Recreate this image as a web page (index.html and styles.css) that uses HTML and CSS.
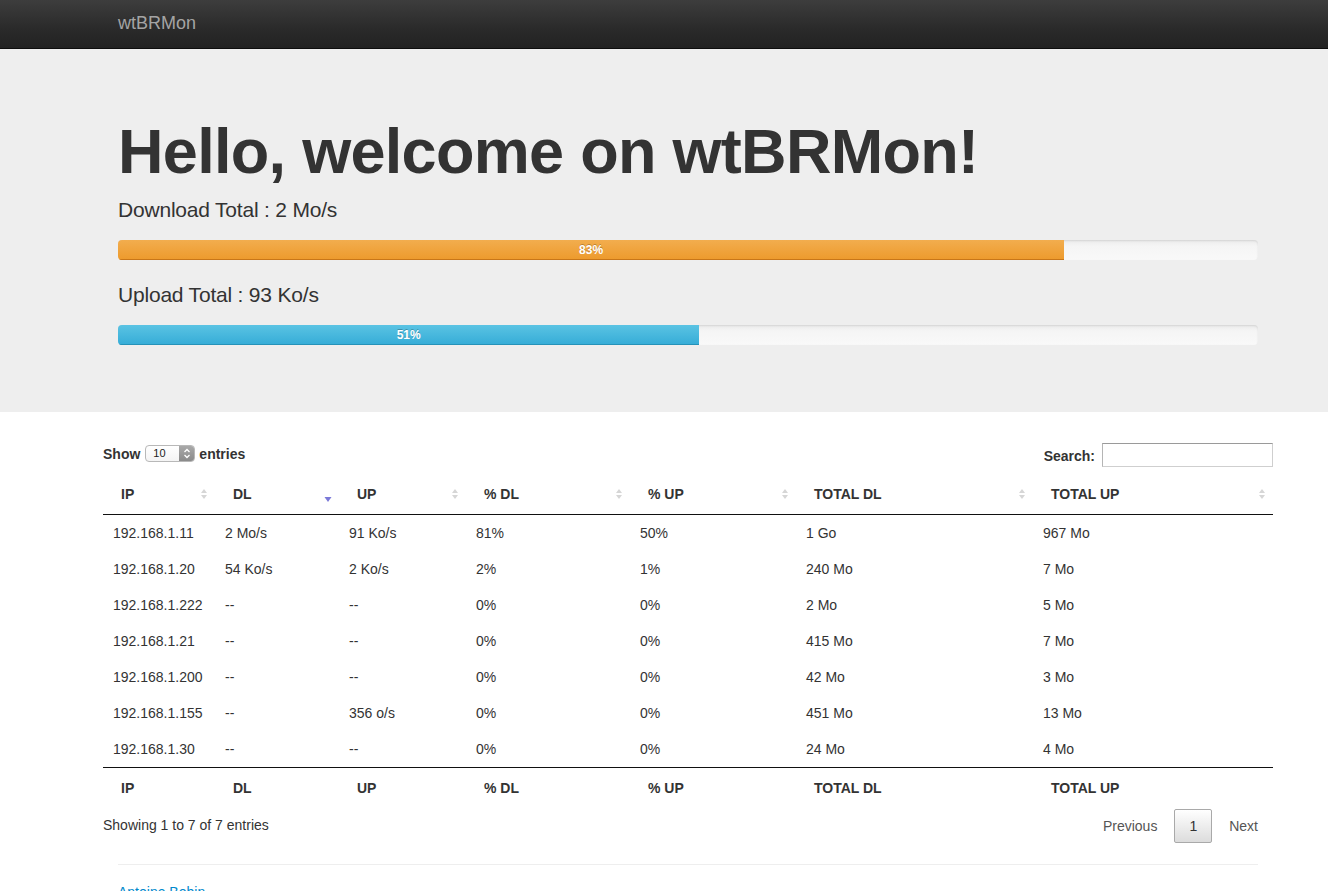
FILE: index.html
```html
<!DOCTYPE html>
<html>
<head>
<meta charset="utf-8">
<title>wtBRMon</title>
<link rel="stylesheet" href="styles.css">
</head>
<body>
<div class="navbar"><div class="brand">wtBRMon</div></div>
<div class="hero">
  <div class="hero-inner">
    <h1>Hello, welcome on wtBRMon!</h1>
    <p class="total">Download Total : 2 Mo/s</p>
    <div class="progress progress-dl"><div class="bar bar-warning" style="width:83%">83%</div></div>
    <p class="total total-up">Upload Total : 93 Ko/s</p>
    <div class="progress"><div class="bar bar-info" style="width:51%">51%</div></div>
  </div>
</div>
<div class="main">
  <div class="dt-wrapper">
    <div class="dt-top">
      <div class="dt-length"><span>Show</span><span class="fake-select"><span class="fs-val">10</span><span class="fs-btn"><svg width="8" height="11" viewBox="0 0 8 11"><polyline points="1.5,4 4,1.5 6.5,4" fill="none" stroke="#fff" stroke-width="1.3"/><polyline points="1.5,7 4,9.5 6.5,7" fill="none" stroke="#fff" stroke-width="1.3"/></svg></span></span><span>entries</span></div>
      <div class="dt-filter"><label>Search:</label><input type="text" class="search"></div>
    </div>
    <table class="dt">
      <colgroup>
        <col class="w1"><col class="w2"><col class="w3"><col class="w4"><col class="w5"><col class="w6"><col class="w7">
      </colgroup>
      <thead>
        <tr>
          <th><div class="th-in"><span>IP</span><svg class="sort" width="8" height="20" viewBox="0 0 8 20"><polygon points="1,9 4,5 7,9" fill="#d6d6d6"/><polygon points="1,11 4,15 7,11" fill="#d6d6d6"/></svg></div></th>
          <th><div class="th-in"><span>DL</span><svg class="sort" width="8" height="20" viewBox="0 0 8 20"><polygon points="0.5,13 7.5,13 4,18" fill="#7b79d8"/></svg></div></th>
          <th><div class="th-in"><span>UP</span><svg class="sort" width="8" height="20" viewBox="0 0 8 20"><polygon points="1,9 4,5 7,9" fill="#d6d6d6"/><polygon points="1,11 4,15 7,11" fill="#d6d6d6"/></svg></div></th>
          <th><div class="th-in"><span>% DL</span><svg class="sort" width="8" height="20" viewBox="0 0 8 20"><polygon points="1,9 4,5 7,9" fill="#d6d6d6"/><polygon points="1,11 4,15 7,11" fill="#d6d6d6"/></svg></div></th>
          <th><div class="th-in"><span>% UP</span><svg class="sort" width="8" height="20" viewBox="0 0 8 20"><polygon points="1,9 4,5 7,9" fill="#d6d6d6"/><polygon points="1,11 4,15 7,11" fill="#d6d6d6"/></svg></div></th>
          <th><div class="th-in"><span>TOTAL DL</span><svg class="sort" width="8" height="20" viewBox="0 0 8 20"><polygon points="1,9 4,5 7,9" fill="#d6d6d6"/><polygon points="1,11 4,15 7,11" fill="#d6d6d6"/></svg></div></th>
          <th><div class="th-in"><span>TOTAL UP</span><svg class="sort" width="8" height="20" viewBox="0 0 8 20"><polygon points="1,9 4,5 7,9" fill="#d6d6d6"/><polygon points="1,11 4,15 7,11" fill="#d6d6d6"/></svg></div></th>
        </tr>
      </thead>
      <tbody>
        <tr><td>192.168.1.11</td><td>2 Mo/s</td><td>91 Ko/s</td><td>81%</td><td>50%</td><td>1 Go</td><td>967 Mo</td></tr>
        <tr><td>192.168.1.20</td><td>54 Ko/s</td><td>2 Ko/s</td><td>2%</td><td>1%</td><td>240 Mo</td><td>7 Mo</td></tr>
        <tr><td>192.168.1.222</td><td>--</td><td>--</td><td>0%</td><td>0%</td><td>2 Mo</td><td>5 Mo</td></tr>
        <tr><td>192.168.1.21</td><td>--</td><td>--</td><td>0%</td><td>0%</td><td>415 Mo</td><td>7 Mo</td></tr>
        <tr><td>192.168.1.200</td><td>--</td><td>--</td><td>0%</td><td>0%</td><td>42 Mo</td><td>3 Mo</td></tr>
        <tr><td>192.168.1.155</td><td>--</td><td>356 o/s</td><td>0%</td><td>0%</td><td>451 Mo</td><td>13 Mo</td></tr>
        <tr><td>192.168.1.30</td><td>--</td><td>--</td><td>0%</td><td>0%</td><td>24 Mo</td><td>4 Mo</td></tr>
      </tbody>
      <tfoot>
        <tr><th>IP</th><th>DL</th><th>UP</th><th>% DL</th><th>% UP</th><th>TOTAL DL</th><th>TOTAL UP</th></tr>
      </tfoot>
    </table>
    <div class="dt-bottom">
      <div class="dt-info">Showing 1 to 7 of 7 entries</div>
      <div class="dt-paginate"><a class="pg">Previous</a><a class="pg current">1</a><a class="pg">Next</a></div>
    </div>
  </div>
  <hr class="sep">
  <footer class="footer"><a class="author">Antoine Bobin</a></footer>
</div>
</body>
</html>
```
FILE: styles.css
```css
* { box-sizing: border-box; }
html, body { margin: 0; padding: 0; }
body {
  font-family: "Liberation Sans", Arial, Helvetica, sans-serif;
  font-size: 14px;
  line-height: 20px;
  color: #333;
  background: #fff;
  overflow: hidden;
}
.navbar {
  height: 49px;
  background: linear-gradient(to bottom, #3d3d3d 0%, #2a2a2a 60%, #222 100%);
  border-bottom: 1px solid #0d0d0d;
  padding-left: 118px;
  display: flex;
  align-items: center;
}
.brand {
  font-size: 18px;
  line-height: 20px;
  color: #a4a4a4;
  margin-top: -3px;
}
.hero {
  background: #eeeeee;
  height: 363px;
  padding: 66px 0 0 118px;
}
.hero-inner { width: 1140px; }
.hero h1 {
  margin: 0;
  font-size: 63px;
  line-height: 72px;
  font-weight: bold;
  letter-spacing: -0.7px;
  color: #333;
}
.total {
  margin: 8px 0 15px;
  font-size: 21px;
  line-height: 30px;
  letter-spacing: -0.2px;
  color: #333;
}
.total-up { margin-top: 0; }
.progress {
  height: 20px;
  border-radius: 4px;
  background: linear-gradient(to bottom, #ebebeb 0%, #f5f5f5 30%, #f9f9f9 100%);
  box-shadow: inset 0 1px 2px rgba(0,0,0,0.1);
  overflow: hidden;
}
.progress-dl { margin-bottom: 20px; }
.bar {
  height: 20px;
  color: #fff;
  font-size: 12px;
  font-weight: bold;
  line-height: 20px;
  text-align: center;
  text-shadow: 0 -1px 0 rgba(0,0,0,0.25);
}
.bar-warning { background: linear-gradient(to bottom, #f2ad4e, #ed9a2c); box-shadow: inset 0 -1px 0 #c87618; }
.bar-info { background: linear-gradient(to bottom, #5ac3e3, #35acd7); box-shadow: inset 0 -1px 0 #2592b8; }

.main { padding-left: 118px; width: 1258px; }
.dt-wrapper { margin-left: -15px; width: 1170px; }
.dt-top {
  display: flex;
  justify-content: space-between;
  align-items: flex-start;
  padding-top: 31px;
  height: 62px;
}
.dt-length {
  font-weight: bold;
  display: flex;
  align-items: center;
  height: 17px;
  margin-top: 2px;
}
.fake-select {
  display: flex;
  width: 50px;
  height: 17px;
  border: 1px solid #b8b8b8;
  border-radius: 4px;
  background: linear-gradient(to bottom, #fff, #f4f4f4);
  overflow: hidden;
  margin: 0 4px 0 5px;
}
.fs-val {
  flex: 1;
  font-size: 11px;
  font-weight: normal;
  line-height: 15px;
  padding-left: 7px;
  color: #222;
}
.fs-btn {
  width: 15px;
  background: linear-gradient(to bottom, #a9a9a9, #8a8a8a);
  display: flex;
  align-items: center;
  justify-content: center;
}
.dt-filter {
  display: flex;
  align-items: center;
  height: 24px;
  font-weight: bold;
}
.dt-filter label { margin-right: 7px; margin-top: 2px; }
.search {
  width: 171px;
  height: 24px;
  border: 1px solid #cfcfcf;
  border-top-color: #9a9a9a;
  border-left-color: #b5b5b5;
  background: #fff;
  padding: 0;
  margin: 0;
}

.dt {
  width: 1170px;
  table-layout: fixed;
  border-collapse: separate;
  border-spacing: 0;
}
.w1 { width: 112px; } .w2 { width: 124px; } .w3 { width: 127px; } .w4 { width: 164px; }
.w5 { width: 166px; } .w6 { width: 237px; } .w7 { width: 240px; }
.dt thead th {
  text-align: left;
  font-weight: bold;
  padding: 10px 7px 10px 18px;
  border-bottom: 1px solid #111;
}
.th-in { display: flex; justify-content: space-between; align-items: center; height: 20px; }
.sort { display: block; }
.dt tbody td {
  padding: 8px 10px;
  height: 36px;
  white-space: nowrap;
}
.dt tfoot th {
  text-align: left;
  font-weight: bold;
  padding: 10px 18px 6px 18px;
  border-top: 1px solid #111;
}
.dt-bottom {
  display: flex;
  justify-content: space-between;
  align-items: flex-start;
}
.dt-info { padding-top: 11px; }
.dt-paginate { display: flex; padding-top: 5px; }
.pg {
  display: block;
  padding: 7px 14px;
  line-height: 18px;
  border: 1px solid transparent;
  border-radius: 2px;
  margin-left: 2px;
  color: #555;
}
.pg.current {
  color: #333;
  border-color: #a9a9a9;
  background: linear-gradient(to bottom, #fff 0%, #dcdcdc 100%);
}
.sep {
  margin: 21px 0 0;
  border: 0;
  border-top: 1px solid #eee;
  width: 1140px;
}
.footer { padding-top: 17px; }
.author { color: #0088cc; }
```
